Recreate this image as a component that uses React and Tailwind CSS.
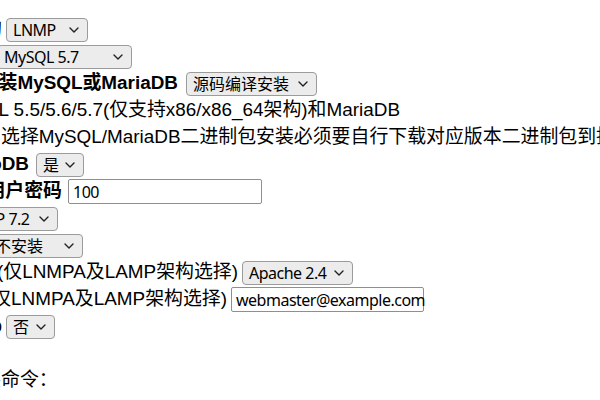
import React from "react";

const labelFont = { fontFamily: '"Liberation Sans", "Noto Sans CJK SC", sans-serif' };
const ctrlFont = { fontFamily: '"Noto Sans", "Noto Sans CJK SC", sans-serif' };

function Chevron() {
  return (
    <svg width="10" height="6" viewBox="0 0 10 6" className="shrink-0">
      <path d="M1 1 L5 5 L9 1" fill="none" stroke="#222" strokeWidth="1.4" strokeLinecap="round" strokeLinejoin="round" />
    </svg>
  );
}

function Sel({ className, children }) {
  return (
    <div
      style={ctrlFont}
      className={
        "shrink-0 flex items-center justify-between h-[24px] pl-[6px] pr-[8px] rounded-[4px] border border-[#9b9b9b] bg-[#ececec] text-[16px] tracking-[-0.5px] leading-none text-black whitespace-nowrap " +
        className
      }
    >
      <span>{children}</span>
      <Chevron />
    </div>
  );
}

function Inp({ className, value }) {
  return (
    <div
      style={ctrlFont}
      className={
        "shrink-0 flex items-center h-[25px] px-[4px] rounded-[2px] border border-[#8f8f8f] bg-white text-[16px] tracking-[-0.5px] leading-none text-black whitespace-nowrap " +
        className
      }
    >
      {value}
    </div>
  );
}

function Row({ children }) {
  return <div className="flex items-center h-[27px] whitespace-nowrap">{children}</div>;
}

export default function App() {
  return (
    <div className="w-[600px] h-[400px] overflow-hidden bg-white text-black text-[18.9px]" style={labelFont}>
      <div className="flex flex-col pt-[16px]">
        <Row>
          <span className="shrink-0 w-[2px] flex justify-end">选择架构</span>
          <Sel className="ml-[4px] w-[82px]">LNMP</Sel>
        </Row>
        <Row>
          <span className="shrink-0 ml-[-7px] w-0 flex justify-end">数据库版本</span>
          <Sel className="ml-[4px] w-[135px]">MySQL 5.7</Sel>
        </Row>
        <Row>
          <span className="shrink-0 w-[178px] flex justify-end font-bold">是否安装MySQL或MariaDB</span>
          <Sel className="ml-[8px] w-[131px] tracking-normal">源码编译安装</Sel>
        </Row>
        <Row>
          <span className="shrink-0 w-[400px] flex justify-end">支持MySQL 5.5/5.6/5.7(仅支持x86/x86_64架构)和MariaDB</span>
        </Row>
        <Row>
          <span className="shrink-0 w-[1px] flex justify-end">注：</span>
          <span className="shrink-0">选择MySQL/MariaDB二进制包安装必须要自行下载对应版本二进制包到指定目录</span>
        </Row>
        <Row>
          <span className="shrink-0 w-[29px] flex justify-end font-bold">InnoDB</span>
          <Sel className="ml-[7px] w-[48px] tracking-normal">是</Sel>
        </Row>
        <Row>
          <span className="shrink-0 w-[62px] flex justify-end font-bold">数据库root用户密码</span>
          <Inp className="ml-[6px] w-[194px]" value="100" />
        </Row>
        <Row>
          <span className="shrink-0 ml-[-36px] w-0 flex justify-end">PHP版本</span>
          <Sel className="ml-[4px] w-[90px]">PHP 7.2</Sel>
        </Row>
        <Row>
          <span className="shrink-0 ml-[-16px] w-0 flex justify-end">缓存</span>
          <Sel className="ml-[4px] w-[95px] tracking-normal">不安装</Sel>
        </Row>
        <Row>
          <span className="shrink-0 w-[238px] flex justify-end">Apache版本(仅LNMPA及LAMP架构选择)</span>
          <Sel className="ml-[4px] w-[111px]">Apache 2.4</Sel>
        </Row>
        <Row>
          <span className="shrink-0 w-[227px] flex justify-end">邮箱(仅LNMPA及LAMP架构选择)</span>
          <Inp className="ml-[4px] w-[193px]" value="webmaster@example.com" />
        </Row>
        <Row>
          <span className="shrink-0 w-[2px] flex justify-end">ftp</span>
          <Sel className="ml-[4px] w-[49px] tracking-normal">否</Sel>
        </Row>
        <Row>
          <span></span>
        </Row>
        <Row>
          <span className="shrink-0 w-[1px] flex justify-end">安装</span>
          <span className="shrink-0">命令：</span>
        </Row>
      </div>
    </div>
  );
}
